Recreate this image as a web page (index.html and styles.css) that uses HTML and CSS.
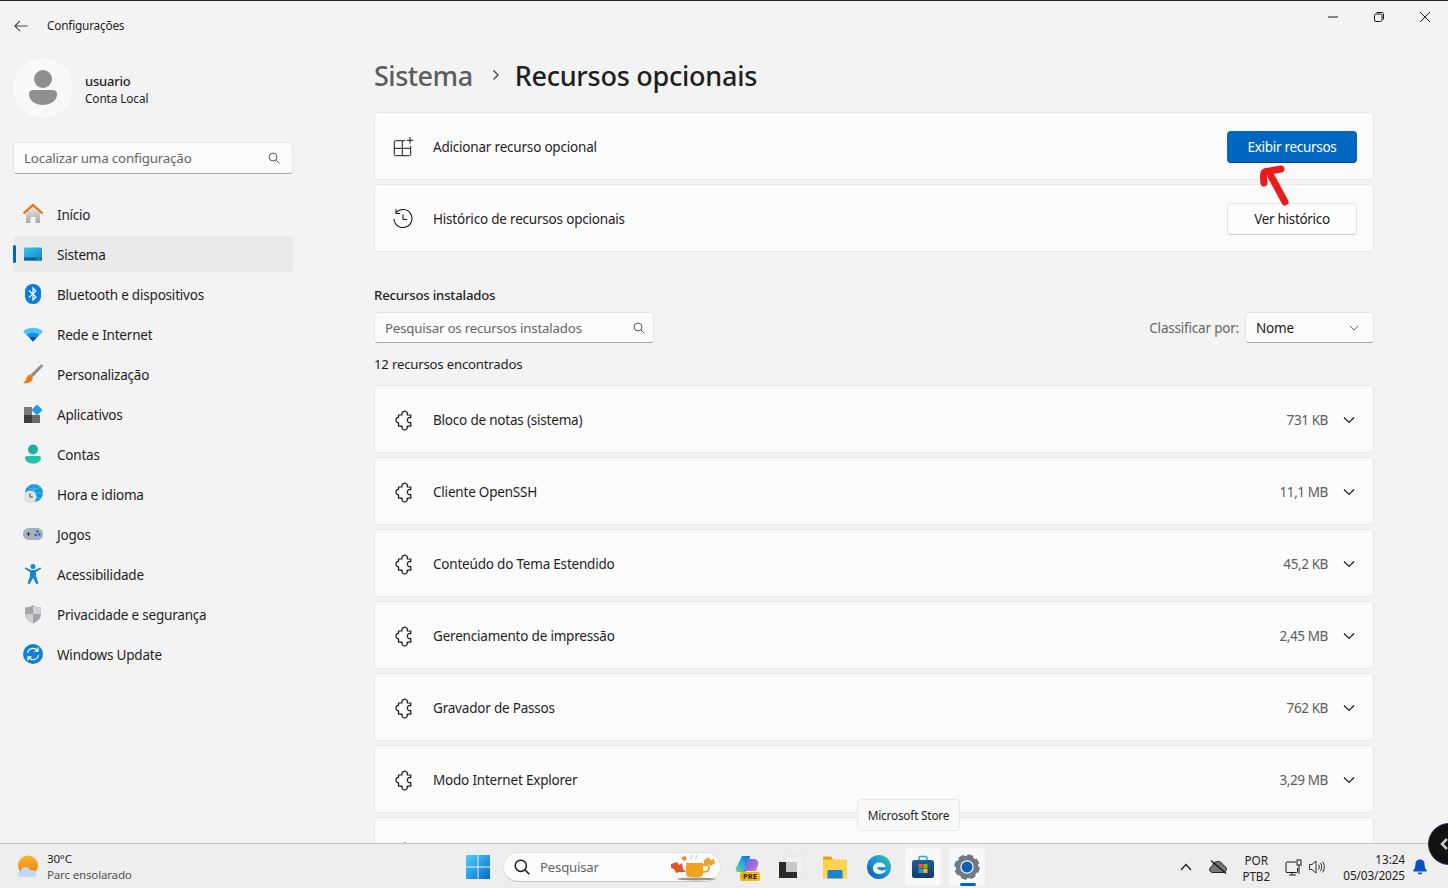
FILE: index.html
```html
<!DOCTYPE html>
<html lang="pt-BR">

<head>
  <meta charset="UTF-8">
  <title>Configurações</title>
  <link rel="stylesheet" href="styles.css">
</head>

<body>
  <svg class="defs">
    <defs>
      <symbol id="puzzle" viewBox="1 1 18 18" overflow="visible">
        <path d="M4.500 5.500H7.700a2.500 2.500 0 1 1 4.600 0H15.500V8a2.300 2.300 0 1 0 0 4.200V15.500H12.300a2.500 2.500 0 1 1-4.600 0H4.500V12.500a2.400 2.400 0 1 1 0-4.800Z" fill="none" stroke="#1b1b1b" stroke-width="1.100" stroke-linejoin="round" transform="translate(1.500 0)"/>
      </symbol>
      <symbol id="chev" viewBox="0 0 12 12">
        <path d="M1 3.500l5 5 5-5" fill="none" stroke="#1b1b1b" stroke-width="1.200"/>
      </symbol>
      <symbol id="lens" viewBox="0 0 12 12">
        <circle cx="5" cy="5" r="3.900" fill="none" stroke="currentColor" stroke-width="1"/>
        <path d="M8 8l3.500 3.500" stroke="currentColor" stroke-width="1"/>
      </symbol>
      <linearGradient id="sysG" x1="0" y1="0" x2="1" y2="1">
        <stop offset="0" stop-color="#36c6ea"/><stop offset="1" stop-color="#1488c8"/>
      </linearGradient>
      <linearGradient id="homeG" x1="0" y1="0" x2="0" y2="1">
        <stop offset="0" stop-color="#e8e8e8"/><stop offset="1" stop-color="#a8a8a8"/>
      </linearGradient>
      <linearGradient id="sunG" x1="0" y1="0" x2="0" y2="1">
        <stop offset="0" stop-color="#fbb52c"/><stop offset="1" stop-color="#ee7d12"/>
      </linearGradient>
      <linearGradient id="winG" x1="0" y1="0" x2="1" y2="1">
        <stop offset="0" stop-color="#4fd0fb"/><stop offset="1" stop-color="#0669c8"/>
      </linearGradient>
      <linearGradient id="edgeG" x1="1" y1="0" x2="0" y2="1">
        <stop offset="0" stop-color="#3ecb8e"/><stop offset=".45" stop-color="#1a9ad8"/><stop offset="1" stop-color="#0c55a8"/>
      </linearGradient>
      <linearGradient id="copL" x1="0" y1="1" x2="1" y2="0">
        <stop offset="0" stop-color="#8fd14f"/><stop offset=".4" stop-color="#27b8e0"/><stop offset="1" stop-color="#1f5fd8"/>
      </linearGradient>
      <linearGradient id="copR" x1="0" y1="0" x2="1" y2="1">
        <stop offset="0" stop-color="#3f7fe8"/><stop offset=".6" stop-color="#a868e0"/><stop offset="1" stop-color="#ee80b8"/>
      </linearGradient>
      <linearGradient id="storeG" x1="0" y1="0" x2="0" y2="1">
        <stop offset="0" stop-color="#1c5f9c"/><stop offset="1" stop-color="#123a68"/>
      </linearGradient>
    </defs>
  </svg>

  <div class="topLine"></div>

  <div class="window">
    <header class="titleBar">
      <svg class="backIcon" width="14" height="12" viewBox="0 0 14 12"><path d="M6 .8L.9 6 6 11.200M1 6h12.500" fill="none" stroke="#444" stroke-width="1.100"/></svg>
      <span class="appName">Configurações</span>
      <div class="winBtns">
        <svg width="10" height="10" viewBox="0 0 10 10"><path d="M0 5h10" stroke="#1b1b1b"/></svg>
        <svg width="10" height="10" viewBox="0 0 10 10"><rect x=".5" y="2" width="7.500" height="7.500" rx="1.500" fill="none" stroke="#1b1b1b"/><path d="M2.500.5H8c.8 0 1.500.7 1.500 1.500v5.500" fill="none" stroke="#1b1b1b"/></svg>
        <svg width="10" height="10" viewBox="0 0 10 10"><path d="M0 0l10 10M10 0L0 10" stroke="#1b1b1b"/></svg>
      </div>
    </header>

    <div class="columns">
      <aside class="sidebar">
        <div class="profile">
          <div class="avatar">
            <svg width="30" height="36" viewBox="0 0 30 36"><circle cx="15" cy="9" r="9" fill="#8f8f8f"/><path d="M1 24c0-3 2-4 5-4h18c3 0 5 1 5 4 0 7-7 11-14 11S1 31 1 24Z" fill="#8f8f8f"/></svg>
          </div>
          <div class="userInfo">
            <div class="userName">usuario</div>
            <div class="userType">Conta Local</div>
          </div>
        </div>

        <div class="inputBox sideSearch">
          <span>Localizar uma configuração</span>
          <svg class="lens" width="12" height="12"><use href="#lens"/></svg>
        </div>

        <nav class="nav">
          <a class="navItem">
            <svg width="22" height="22" viewBox="0 0 22 22"><path d="M4 9.500L11 3.500l7 6V20H13.500v-6h-5v6H4Z" fill="url(#homeG)"/><path d="M1.500 10.500L11 2l9.500 8.500" fill="none" stroke="#e8710a" stroke-width="2.200"/></svg>
            Início
          </a>
          <a class="navItem active">
            <svg width="20" height="16" viewBox="0 0 20 16"><rect x="1" y="1.500" width="18" height="13" rx="1.200" fill="url(#sysG)"/><rect x="1" y="11.500" width="18" height="3" fill="#0f5f96"/><path d="M14.500 13h1M16.500 13h1" stroke="#9fd8f0"/></svg>
            Sistema
          </a>
          <a class="navItem">
            <svg width="16" height="22" viewBox="0 0 16 22"><rect x="0" y="1" width="16" height="20" rx="7.500" fill="#0a7ce0"/><path d="M4 7.500l7 6.500-3 3V5l3 3-7 6.500" fill="none" stroke="#fff" stroke-width="1.200"/></svg>
            Bluetooth e dispositivos
          </a>
          <a class="navItem">
            <svg width="20" height="16" viewBox="0 0 20 16"><path d="M0 5.500C5.500.5 14.500.5 20 5.500L10 15.500Z" fill="#4cc2ff"/><path d="M3.700 9C7.300 6 12.700 6 16.300 9L10 15.500Z" fill="#0f8fe6"/><path d="M6.500 11.800c2.200-1.500 4.800-1.500 7 0L10 15.500Z" fill="#0a4f9e"/></svg>
            Rede e Internet
          </a>
          <a class="navItem">
            <svg width="20" height="20" viewBox="0 0 20 20"><path d="M18 .5L7.500 10.500l2.500 2.500L19.800 2.500c.6-1.200-.6-2.500-1.800-2Z" fill="#8e8e8e"/><path d="M7.500 10.500c-2.500 0-3.500 2-4 4-.4 1.500-1.500 3-3.500 4.500 3.500.6 6.500 0 8.500-2 1.800-1.800 1.800-4-1-6.500Z" fill="#ee7a18"/></svg>
            Personalização
          </a>
          <a class="navItem">
            <svg width="20" height="20" viewBox="0 0 20 20"><rect x="1" y="3" width="8" height="8" fill="#7a7a7a"/><rect x="1" y="11" width="8" height="8" fill="#3d3d3d"/><rect x="9" y="11" width="8" height="8" fill="#6a6a6a"/><path d="M14 .5L19.500 6 14 11.500 8.500 6Z" fill="#1e9be8"/></svg>
            Aplicativos
          </a>
          <a class="navItem">
            <svg width="18" height="20" viewBox="0 0 18 20"><circle cx="9" cy="5.500" r="5" fill="#1fae9c"/><path d="M1 14c0-1.500 1-2 2.500-2h11c1.500 0 2.500.5 2.500 2 0 3.500-4 5.500-8 5.500S1 17.500 1 14Z" fill="#27c0a8"/></svg>
            Contas
          </a>
          <a class="navItem">
            <svg width="20" height="20" viewBox="0 0 20 20"><circle cx="11" cy="9" r="9" fill="#129bd8"/><path d="M11 0v18M2 9h18M5 3c4 3 8 3 12 0M5 15c4-3 8-3 12 0" stroke="#6fd0ee" stroke-width=".7" fill="none"/><circle cx="7" cy="13" r="6.500" fill="#e2e2e2"/><path d="M7 9.500V13h2.800" stroke="#444" fill="none"/></svg>
            Hora e idioma
          </a>
          <a class="navItem">
            <svg width="20" height="14" viewBox="0 0 20 14"><rect x="0" y="1" width="20" height="12" rx="5.500" fill="#a9b2bc"/><path d="M3.500 7h4M5.500 5v4" stroke="#333"/><circle cx="14.500" cy="4.500" r="1.300" fill="#1565c8"/><circle cx="12.800" cy="8" r="1.300" fill="#1565c8"/><circle cx="16.300" cy="7.500" r="1.300" fill="#1565c8"/></svg>
            Jogos
          </a>
          <a class="navItem">
            <svg width="18" height="20" viewBox="0 0 18 20"><circle cx="9" cy="2.500" r="2.500" fill="#1585de"/><path d="M.8 4.800l.8-1.300L7 6h4l5.400-2.500.8 1.300L12 8v4l2.500 7.500-2.200.5L9 14l-3.300 6-2.200-.5L6 12V8Z" fill="#1585de"/></svg>
            Acessibilidade
          </a>
          <a class="navItem">
            <svg width="18" height="20" viewBox="0 0 18 20"><path d="M9 1c2.800 1.800 5.500 2.500 8 2.500V10c0 5-4 8-8 9.500C5 18 1 15 1 10V3.500C3.500 3.500 6.200 2.800 9 1Z" fill="#a0a5aa"/><path d="M9 1c2.800 1.800 5.500 2.500 8 2.500V10H9ZM9 10v9.500C5 18 1 15 1 10Z" fill="#ccd0d4"/></svg>
            Privacidade e segurança
          </a>
          <a class="navItem">
            <svg width="20" height="20" viewBox="0 0 20 20"><circle cx="10" cy="10" r="10" fill="#0f80d8"/><path d="M4.500 9a5.500 5.500 0 0 1 9.800-2.500M15.500 11a5.500 5.500 0 0 1-9.800 2.500" fill="none" stroke="#fff" stroke-width="1.300"/><path d="M15 3.500v3.700h-3.500M5 16.500v-3.700h3.500" fill="none" stroke="#fff" stroke-width="1.300"/></svg>
            Windows Update
          </a>
        </nav>
      </aside>

      <main class="content">
        <h1 class="crumb">
          <span class="crumbParent">Sistema</span>
          <svg class="crumbSep" width="8" height="12" viewBox="0 0 8 12"><path d="M1.500 1.500L6 6l-4.500 4.500" fill="none" stroke="#555" stroke-width="1.500"/></svg>
          <span>Recursos opcionais</span>
        </h1>

        <div class="cards">
          <div class="card">
            <svg class="cardIcon" width="20" height="20" viewBox="0 0 20 20"><path d="M9.300 11.300V3.700H2.500c-.7 0-1.200.5-1.200 1.200v12.600c0 .7.5 1.200 1.200 1.200h14c.7 0 1.200-.5 1.200-1.200V9M1.300 11.300h16.400M9.300 11.300v7.400M9.300 3.700h3" fill="none" stroke="#1b1b1b" stroke-width="1"/><path d="M13.700 3.300h6.600M17 0v6.600" stroke="#1b1b1b" stroke-width="1"/></svg>
            <span class="cardName">Adicionar recurso opcional</span>
            <button class="btn primary">Exibir recursos</button>
          </div>
          <div class="card">
            <svg class="cardIcon" width="20" height="20" viewBox="0 0 20 20"><path d="M3.300 3.500A9 9 0 1 1 1 10" fill="none" stroke="#1b1b1b" stroke-width="1.100"/><path d="M3 .3V4.500h4.200M10 5.500v5h4" fill="none" stroke="#1b1b1b" stroke-width="1.100"/></svg>
            <span class="cardName">Histórico de recursos opcionais</span>
            <button class="btn">Ver histórico</button>
          </div>
        </div>

        <h2 class="sectionTitle">Recursos instalados</h2>

        <div class="toolbar">
          <div class="inputBox featSearch">
            <span>Pesquisar os recursos instalados</span>
            <svg class="lens" width="12" height="12"><use href="#lens"/></svg>
          </div>
          <span class="sortLabel">Classificar por:</span>
          <div class="inputBox sortBox">
            <span class="sortVal">Nome</span>
            <svg width="10" height="10" class="sortChev"><use href="#chev"/></svg>
          </div>
        </div>

        <div class="countLine">12 recursos encontrados</div>

        <div class="cards">
          <div class="card">
            <svg class="cardIcon" width="20" height="20"><use href="#puzzle"/></svg>
            <span class="cardName">Bloco de notas (sistema)</span>
            <span class="size">731 KB</span>
            <svg class="rowChev" width="12" height="12"><use href="#chev"/></svg>
          </div>
          <div class="card">
            <svg class="cardIcon" width="20" height="20"><use href="#puzzle"/></svg>
            <span class="cardName">Cliente OpenSSH</span>
            <span class="size">11,1 MB</span>
            <svg class="rowChev" width="12" height="12"><use href="#chev"/></svg>
          </div>
          <div class="card">
            <svg class="cardIcon" width="20" height="20"><use href="#puzzle"/></svg>
            <span class="cardName">Conteúdo do Tema Estendido</span>
            <span class="size">45,2 KB</span>
            <svg class="rowChev" width="12" height="12"><use href="#chev"/></svg>
          </div>
          <div class="card">
            <svg class="cardIcon" width="20" height="20"><use href="#puzzle"/></svg>
            <span class="cardName">Gerenciamento de impressão</span>
            <span class="size">2,45 MB</span>
            <svg class="rowChev" width="12" height="12"><use href="#chev"/></svg>
          </div>
          <div class="card">
            <svg class="cardIcon" width="20" height="20"><use href="#puzzle"/></svg>
            <span class="cardName">Gravador de Passos</span>
            <span class="size">762 KB</span>
            <svg class="rowChev" width="12" height="12"><use href="#chev"/></svg>
          </div>
          <div class="card">
            <svg class="cardIcon" width="20" height="20"><use href="#puzzle"/></svg>
            <span class="cardName">Modo Internet Explorer</span>
            <span class="size">3,29 MB</span>
            <svg class="rowChev" width="12" height="12"><use href="#chev"/></svg>
          </div>
          <div class="card">
            <svg class="cardIcon" width="20" height="20"><use href="#puzzle"/></svg>
          </div>
        </div>
      </main>
    </div>
  </div>

  <footer class="taskbar">
    <div class="weather">
      <svg width="24" height="24" viewBox="0 0 24 24"><circle cx="11" cy="10.500" r="10" fill="url(#sunG)"/><path d="M4 22c-2.500 0-3.500-1.500-3.500-3 0-1.700 1.300-3 3-3 .5-2.500 2.500-4 5-4 2.300 0 4.300 1.300 5 3.500 .7-.3 2-.3 3 0 2 .5 3 1.800 3 3.300 0 1.800-1.300 3.200-3.500 3.200Z" fill="#c2d8f4"/></svg>
      <div>
        <div class="temp">30°C</div>
        <div class="cond">Parc ensolarado</div>
      </div>
    </div>

    <div class="taskApps">
      <svg class="startIcon" width="24" height="24" viewBox="0 0 24 24"><path d="M0 0h11.500v11.500H0ZM12.500 0H24v11.500H12.500ZM0 12.500h11.500V24H0ZM12.500 12.500H24V24H12.500Z" fill="url(#winG)"/></svg>
      <div class="taskSearch">
        <svg width="16" height="16" viewBox="0 0 16 16"><circle cx="6.800" cy="6.800" r="5.600" fill="none" stroke="#1b1b1b" stroke-width="1.500"/><path d="M10.800 10.800l4.500 4.500" stroke="#1b1b1b" stroke-width="1.600"/></svg>
        <span>Pesquisar</span>
        <svg class="mug" width="50" height="28" viewBox="0 0 50 28"><path d="M1 11l6-2 2 3 3-2 1 6 3 3-7 0-3 1-2-4-3-1Z" fill="#e2552b"/><path d="M11 5l4-2 2 3-3 2Z" fill="#e8862a"/><path d="M34 7l5-3 1 3 4-1 1 4-4 3-3-2-4 0Z" fill="#eda22c"/><path d="M16 10h17v11c0 2-2 3-4 3h-9c-2 0-4-1-4-3Z" fill="#f0a321"/><path d="M33 12h3c2 0 3 1 3 3s-2 4-6 4" fill="none" stroke="#f0a321" stroke-width="1.800"/><path d="M21 7c-1-2 1-3 1-5M26 7c-1-2 1-3 1-5" stroke="#d8d8d8" stroke-width="1.500" fill="none"/><ellipse cx="26" cy="26" rx="19" ry="1.500" fill="#9d9285"/></svg>
      </div>
      <div class="taskIcon">
        <svg width="24" height="24" viewBox="0 0 24 24"><path d="M7 1h8l-4 16H3c-2 0-3-2-2-4Z" fill="url(#copL)"/><path d="M12 4h7c3 0 5 3 4 6l-2 6H9Z" fill="url(#copR)"/></svg>
        <span class="preTag">PRE</span>
      </div>
      <div class="taskIcon">
        <svg width="24" height="24" viewBox="0 0 24 24"><rect x="7" y="1" width="17" height="16" fill="#f3f3f3"/><rect x="7" y="1" width="17" height="16" fill="none" stroke="#e2e2e2"/><rect x="0" y="7" width="18" height="16" fill="#2b2b2b"/><rect x="7" y="7" width="11" height="10" fill="#c8c8c8"/></svg>
      </div>
      <div class="taskIcon">
        <svg width="26" height="24" viewBox="0 0 26 24"><path d="M1 3c0-1 .5-1.500 1.500-1.500H9L11.500 5H1Z" fill="#e0a412"/><path d="M1 4.500h24V22c0 1-.5 1.500-1.500 1.500h-21C1.500 23.500 1 23 1 22Z" fill="#fbd34e"/><path d="M7 15h12c1 0 1.500.5 1.500 1.500v7h-15v-7C5.500 15.500 6 15 7 15Z" fill="#1a83d0"/></svg>
      </div>
      <div class="taskIcon">
        <svg width="24" height="24" viewBox="0 0 24 24"><circle cx="12" cy="12" r="12" fill="url(#edgeG)"/><path d="M6 13c0-3.500 3-5.500 6.500-5.500 3.500 0 6 2 6 5H10.500c.5 3 4.500 4 9 2-1.500 3-4.500 4.500-7.500 4.500-3.500 0-6-2.500-6-6Z" fill="#eef4f6"/><path d="M10.500 12.500h8c.3 1 .1 1.500-.5 1.500h-7.500Z" fill="#1682c8"/></svg>
      </div>
      <div class="taskIcon boxed">
        <svg width="24" height="24" viewBox="0 0 24 24"><path d="M8 5V3c0-1 .5-1.500 1.500-1.500h5C15.500 1.500 16 2 16 3v2" fill="none" stroke="#2aa7e0" stroke-width="1.500"/><rect x="1" y="5" width="22" height="18" rx="2.500" fill="url(#storeG)"/><rect x="7.500" y="9" width="4.200" height="4.200" fill="#f25022"/><rect x="12.300" y="9" width="4.200" height="4.200" fill="#7fba00"/><rect x="7.500" y="13.800" width="4.200" height="4.200" fill="#00a4ef"/><rect x="12.300" y="13.800" width="4.200" height="4.200" fill="#ffb900"/></svg>
      </div>
      <div class="taskIcon boxed">
        <svg width="26" height="26" viewBox="0 0 26 26"><circle cx="13" cy="13" r="9" fill="none" stroke="#6f7a85" stroke-width="4.500"/><circle cx="13" cy="13" r="11" fill="none" stroke="#6f7a85" stroke-width="3.500" stroke-dasharray="5.500 3.140"/><circle cx="13" cy="13" r="5.500" fill="#0f5fb0"/></svg>
        <span class="runDot"></span>
      </div>
    </div>

    <div class="tray">
      <svg class="trayChev" width="12" height="8" viewBox="0 0 12 8"><path d="M1 7l5-5.500L11 7" fill="none" stroke="#1b1b1b" stroke-width="1.200"/></svg>
      <svg class="trayCloud" width="18" height="14" viewBox="0 0 18 14"><path d="M4 12.500c-2 0-3.400-1.300-3.400-3 0-1.600 1.100-2.800 2.700-3C3.800 3.500 6 1.500 8.800 1.500c2.700 0 4.800 1.700 5.400 4 1.800.2 3.200 1.700 3.200 3.500 0 2-1.500 3.500-3.500 3.500Z" fill="#777" stroke="#222"/><path d="M2 .5l15 13" stroke="#111" stroke-width="1.200"/></svg>
      <div class="lang"><div>POR</div><div>PTB2</div></div>
      <svg class="trayNet" width="17" height="17" viewBox="0 0 17 17"><path d="M11 3H2C1.300 3 1 3.300 1 4v8.500c0 .7.300 1 1 1h9.500c.7 0 1-.3 1-1V9M7 13.500V16M4 16h7" fill="none" stroke="#1b1b1b"/><rect x="12" y="1" width="4" height="5" fill="none" stroke="#1b1b1b"/><path d="M14 6v9" stroke="#1b1b1b"/></svg>
      <svg class="traySound" width="17" height="14" viewBox="0 0 17 14"><path d="M.5 4.500h2.500L7 1v12L3 9.500H.5Z" fill="none" stroke="#1b1b1b" stroke-width=".9"/><path d="M9.500 4.500c1 1.500 1 3.500 0 5M11.500 3c1.600 2.500 1.600 5.500 0 8M13.500 1.500c2.400 3.500 2.400 7.500 0 11" fill="none" stroke="#1b1b1b" stroke-width=".9"/></svg>
      <div class="clock"><div>13:24</div><div>05/03/2025</div></div>
      <svg class="bell" width="14" height="16" viewBox="0 0 14 16"><path d="M7 .5c2.800 0 4.600 2 4.600 4.700 0 3 .7 4.500 2.200 6.300v1H.2v-1c1.500-1.800 2.200-3.300 2.200-6.300C2.400 2.500 4.200.5 7 .5Z" fill="#0a52c5"/><path d="M4.800 13.500h4.400c0 1.200-1 2-2.200 2s-2.200-.8-2.200-2Z" fill="#0a52c5"/></svg>
    </div>
  </footer>

  <!-- por cima da tela -->
  <svg class="redArrow" width="36" height="44" viewBox="0 0 36 44"><path d="M28 38L14 12M7 19C6 11 6.500 8 9 7.500c5-1 9-1.500 15-2.500" fill="none" stroke="#e81c1c" stroke-width="7" stroke-linecap="round" stroke-linejoin="round"/></svg>
  <div class="tooltip">Microsoft Store</div>
  <div class="floatBtn">
    <svg width="9" height="14" viewBox="0 0 9 14"><path d="M7 2L2 7l5 5" fill="none" stroke="#ccc" stroke-width="2.500"/></svg>
  </div>
</body>

</html>
```

FILE: styles.css
```css
* {
  box-sizing: border-box;
}

body {
  margin: 0;
  width: 1448px;
  height: 888px;
  overflow: hidden;
  display: flex;
  flex-direction: column;
  position: relative;
  background: #f3f3f3;
  color: #1f1f1f;
  font-family: "Noto Sans", "Liberation Sans", sans-serif;
  font-size: 13.5px;
  letter-spacing: -0.2px;
}

.defs {
  position: absolute;
  width: 0;
  height: 0;
}

.topLine {
  height: 1px;
  background: #222;
  flex: none;
}

.window {
  flex: 1;
  min-height: 0;
  display: flex;
  flex-direction: column;
  overflow: hidden;
}

/* barra de titulo */
.titleBar {
  height: 49px;
  flex: none;
  display: flex;
  align-items: center;
  padding: 0 18px 0 14px;
}

.backIcon {
  margin-right: 19px;
}

.appName {
  font-size: 11.8px;
  margin-top: -2px;
}

.winBtns {
  margin-left: auto;
  display: flex;
  gap: 36px;
  align-self: flex-start;
  padding-top: 11px;
}

.columns {
  flex: 1;
  min-height: 0;
  display: flex;
}

/* menu lateral */
.sidebar {
  width: 306px;
  flex: none;
  padding: 8px 13px 0;
}

.profile {
  display: flex;
  align-items: center;
  gap: 12px;
}

.avatar {
  width: 60px;
  height: 60px;
  border-radius: 50%;
  background: #f9f9f9;
  display: flex;
  align-items: center;
  justify-content: center;
}

.userInfo {
  padding-top: 2px;
}

.userName {
  font-weight: 500;
  font-size: 13px;
  line-height: 18px;
}

.userType {
  font-size: 11.8px;
  line-height: 17px;
  letter-spacing: -0.1px;
}

.inputBox {
  display: flex;
  align-items: center;
  background: #fbfbfb;
  border: 1px solid #e6e6e6;
  border-bottom-color: #a8a8a8;
  border-radius: 4px;
  color: #666;
}

.sideSearch {
  width: 280px;
  height: 32px;
  margin-top: 24px;
  padding: 0 12px 0 10px;
  font-size: 13.4px;
}

.lens {
  margin-left: auto;
  color: #555;
}

.nav {
  margin-top: 22px;
  display: flex;
  flex-direction: column;
  gap: 4px;
}

.navItem {
  width: 280px;
  height: 36px;
  display: flex;
  align-items: center;
  padding: 2px 0 0 44px;
  border-radius: 4px;
  position: relative;
}

.navItem svg {
  position: absolute;
  left: 20px;
  top: 50%;
  transform: translate(-50%, -50%);
}

.active {
  background: #eaeaea;
}

.active::before {
  content: "";
  position: absolute;
  left: 0;
  top: 9px;
  width: 3px;
  height: 18px;
  border-radius: 2px;
  background: #0067c0;
}

/* conteudo */
.content {
  width: 1000px;
  margin-left: 68px;
  flex: none;
}

.crumb {
  margin: 6px 0 18px;
  height: 38px;
  display: flex;
  align-items: center;
  font-size: 27px;
  font-weight: 500;
  letter-spacing: -0.25px;
}

.crumbParent {
  color: #5d5d5d;
  letter-spacing: -0.5px;
}

.crumbSep {
  margin: 0 15px 0 19px;
}

.cards {
  display: flex;
  flex-direction: column;
  gap: 4px;
}

.card {
  height: 68px;
  flex: none;
  display: flex;
  align-items: center;
  padding: 2px 16px 0 18px;
  background: #fbfbfb;
  border: 1px solid #e8e8e8;
  border-radius: 4px;
}

.cardIcon {
  flex: none;
  margin-right: 20px;
  overflow: visible;
}

.btn {
  margin-left: auto;
  width: 130px;
  height: 32px;
  font: inherit;
  letter-spacing: -0.3px;
  color: #1b1b1b;
  background: #fefefe;
  border: 1px solid #e5e5e5;
  border-bottom-color: #ccc;
  border-radius: 4px;
}

.primary {
  background: #0067c0;
  color: #fff;
  border-color: #0067c0;
  border-bottom-color: #00467f;
}

.sectionTitle {
  margin: 34px 0 8px;
  font-size: 13.2px;
  font-weight: 500;
  line-height: 18px;
}

.toolbar {
  display: flex;
  align-items: center;
}

.featSearch {
  width: 280px;
  height: 31px;
  padding: 0 8px 0 10px;
  font-size: 13.3px;
}

.sortLabel {
  margin-left: auto;
  color: #666;
  margin-right: 6px;
}

.sortBox {
  width: 129px;
  height: 31px;
  padding: 0 14px 0 10px;
  color: #1b1b1b;
}

.sortChev {
  margin-left: auto;
  opacity: .7;
}

.countLine {
  margin: 11px 0;
  line-height: 20px;
  font-size: 13.2px;
}

.size {
  margin-left: auto;
  color: #5d5d5d;
  letter-spacing: -0.4px;
}

.rowChev {
  margin: 0 2px 0 15px;
}

/* barra de tarefas */
.taskbar {
  height: 45px;
  flex: none;
  display: flex;
  align-items: center;
  position: relative;
  padding-top: 2px;
  background: #eeeeee;
  border-top: 1px solid #c4c4c4;
}

.weather {
  width: 466px;
  flex: none;
  display: flex;
  align-items: center;
  gap: 6px;
  padding-left: 17px;
  font-size: 11.6px;
  line-height: 16px;
}

.cond {
  color: #555;
}

.taskApps {
  display: flex;
  align-items: center;
}

.startIcon {
  margin-right: 13px;
}

.taskSearch {
  width: 218px;
  height: 30px;
  display: flex;
  align-items: center;
  gap: 10px;
  padding-left: 10px;
  background: #fbfbfb;
  border: 1px solid #e2e2e2;
  border-bottom-color: #c4c4c4;
  border-radius: 15px;
  color: #666;
  font-size: 13.2px;
  position: relative;
}

.mug {
  position: absolute;
  right: 0;
  top: 0;
}

.taskIcon {
  width: 38px;
  height: 40px;
  margin-left: 6px;
  display: flex;
  align-items: center;
  justify-content: center;
  position: relative;
  border-radius: 4px;
}

.taskSearch + .taskIcon {
  margin-left: 7px;
}

.boxed {
  background: #f8f8f8;
  border: 1px solid #ececec;
}

.preTag {
  position: absolute;
  left: 12px;
  bottom: 6px;
  width: 20px;
  height: 9px;
  border-radius: 2px;
  background: #f7b500;
  font-size: 7.5px;
  line-height: 9px;
  font-weight: 700;
  letter-spacing: 0;
  text-align: center;
  color: #222;
}

.runDot {
  position: absolute;
  left: 11px;
  bottom: 0;
  width: 16px;
  height: 3px;
  border-radius: 2px;
  background: #0067c0;
}

.tray {
  margin-left: auto;
  padding-right: 21px;
  display: flex;
  align-items: center;
  font-size: 11.8px;
  line-height: 16px;
  letter-spacing: -0.1px;
}

.trayChev {
  margin-right: 17px;
}

.trayCloud {
  margin-right: 9px;
}

.lang {
  text-align: center;
  width: 40px;
  margin-right: 9px;
  padding-top: 2px;
}

.trayNet {
  margin-right: 7px;
}

.traySound {
  margin-right: 17px;
}

.clock {
  text-align: right;
}

.bell {
  margin-left: 8px;
}

/* elementos sobrepostos */
.redArrow {
  position: absolute;
  left: 1257px;
  top: 164px;
}

.tooltip {
  position: absolute;
  left: 857px;
  top: 799px;
  width: 103px;
  height: 32px;
  display: flex;
  align-items: center;
  justify-content: center;
  background: #f9f9f9;
  border: 1px solid #e8e8e8;
  border-radius: 4px;
  font-size: 11.8px;
}

.floatBtn {
  position: absolute;
  left: 1428px;
  top: 823px;
  width: 42px;
  height: 42px;
  border-radius: 50%;
  background: #111;
  border: 1px solid #335;
  display: flex;
  align-items: center;
  padding-left: 11px;
}
```
